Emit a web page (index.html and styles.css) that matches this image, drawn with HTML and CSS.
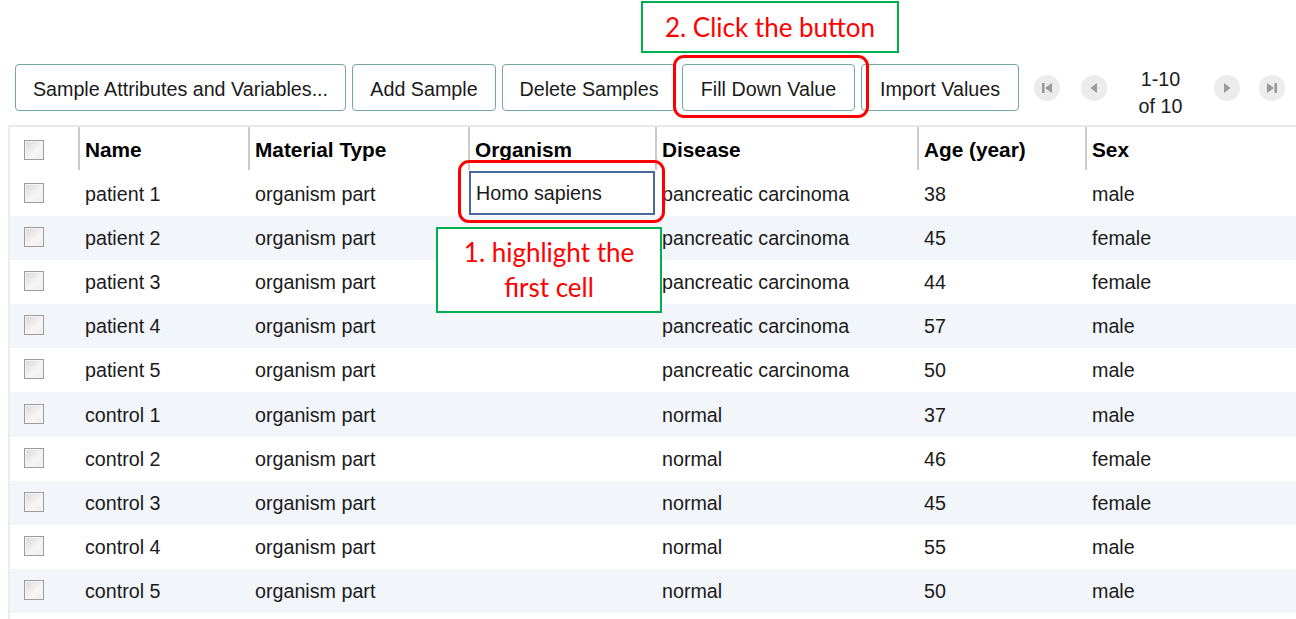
FILE: index.html
```html
<!DOCTYPE html>
<html>
<head>
<meta charset="utf-8">
<link rel="stylesheet" href="styles.css">
</head>
<body>
<div class="page">
  <div class="toolbar">
    <button class="btn btn-attr">Sample Attributes and Variables...</button>
    <button class="btn btn-add">Add Sample</button>
    <button class="btn btn-del">Delete Samples</button>
    <button class="btn btn-fill">Fill Down Value</button>
    <button class="btn btn-imp">Import Values</button>
    <div class="pager">
      <span class="pg"><svg width="26" height="26" viewBox="0 0 26 26"><circle cx="13" cy="13" r="13" fill="#ececec"/><rect x="8" y="8" width="2.5" height="10" fill="#9a9a9a"/><path d="M18 8 L11 13 L18 18 Z" fill="#9a9a9a"/></svg></span>
      <span class="pg"><svg width="26" height="26" viewBox="0 0 26 26"><circle cx="13" cy="13" r="13" fill="#ececec"/><path d="M16 8 L9.5 13 L16 18 Z" fill="#9a9a9a"/></svg></span>
      <span class="pg-text">1-10<br>of 10</span>
      <span class="pg"><svg width="26" height="26" viewBox="0 0 26 26"><circle cx="13" cy="13" r="13" fill="#ececec"/><path d="M10 8 L16.5 13 L10 18 Z" fill="#9a9a9a"/></svg></span>
      <span class="pg"><svg width="26" height="26" viewBox="0 0 26 26"><circle cx="13" cy="13" r="13" fill="#ececec"/><path d="M8 8 L15 13 L8 18 Z" fill="#9a9a9a"/><rect x="15.5" y="8" width="2.5" height="10" fill="#9a9a9a"/></svg></span>
    </div>
  </div>

  <div class="grid">
    <div class="row head">
      <div class="cell ck"><span class="box"></span></div>
      <div class="cell hc">Name</div>
      <div class="cell hc">Material Type</div>
      <div class="cell hc">Organism</div>
      <div class="cell hc">Disease</div>
      <div class="cell hc">Age (year)</div>
      <div class="cell hc">Sex</div>
    </div>
    <div class="row"><div class="cell ck"><span class="box"></span></div><div class="cell">patient 1</div><div class="cell">organism part</div><div class="cell sel">Homo sapiens</div><div class="cell">pancreatic carcinoma</div><div class="cell">38</div><div class="cell">male</div></div>
    <div class="row alt"><div class="cell ck"><span class="box"></span></div><div class="cell">patient 2</div><div class="cell">organism part</div><div class="cell"></div><div class="cell">pancreatic carcinoma</div><div class="cell">45</div><div class="cell">female</div></div>
    <div class="row"><div class="cell ck"><span class="box"></span></div><div class="cell">patient 3</div><div class="cell">organism part</div><div class="cell"></div><div class="cell">pancreatic carcinoma</div><div class="cell">44</div><div class="cell">female</div></div>
    <div class="row alt"><div class="cell ck"><span class="box"></span></div><div class="cell">patient 4</div><div class="cell">organism part</div><div class="cell"></div><div class="cell">pancreatic carcinoma</div><div class="cell">57</div><div class="cell">male</div></div>
    <div class="row"><div class="cell ck"><span class="box"></span></div><div class="cell">patient 5</div><div class="cell">organism part</div><div class="cell"></div><div class="cell">pancreatic carcinoma</div><div class="cell">50</div><div class="cell">male</div></div>
    <div class="row alt"><div class="cell ck"><span class="box"></span></div><div class="cell">control 1</div><div class="cell">organism part</div><div class="cell"></div><div class="cell">normal</div><div class="cell">37</div><div class="cell">male</div></div>
    <div class="row"><div class="cell ck"><span class="box"></span></div><div class="cell">control 2</div><div class="cell">organism part</div><div class="cell"></div><div class="cell">normal</div><div class="cell">46</div><div class="cell">female</div></div>
    <div class="row alt"><div class="cell ck"><span class="box"></span></div><div class="cell">control 3</div><div class="cell">organism part</div><div class="cell"></div><div class="cell">normal</div><div class="cell">45</div><div class="cell">female</div></div>
    <div class="row"><div class="cell ck"><span class="box"></span></div><div class="cell">control 4</div><div class="cell">organism part</div><div class="cell"></div><div class="cell">normal</div><div class="cell">55</div><div class="cell">male</div></div>
    <div class="row alt"><div class="cell ck"><span class="box"></span></div><div class="cell">control 5</div><div class="cell">organism part</div><div class="cell"></div><div class="cell">normal</div><div class="cell">50</div><div class="cell">male</div></div>
  </div>

  <div class="note note-top">2. Click the button</div>
  <div class="note note-cell">1. highlight the<br>first cell</div>
  <div class="ring ring-btn"></div>
  <div class="ring ring-cell"></div>
</div>
</body>
</html>
```

FILE: styles.css
```css
* { box-sizing: border-box; }
html, body { margin: 0; padding: 0; background: #fff; }
body {
  font-family: "Liberation Sans", Arial, sans-serif;
  font-size: 19.7px;
  color: #1a1a1a;
  width: 1296px;
  height: 619px;
  overflow: hidden;
}
.page { position: relative; width: 1296px; height: 619px; }

.toolbar {
  display: flex;
  align-items: center;
  gap: 6px;
  padding: 64px 0 0 15px;
  height: 111px;
}
.btn {
  height: 47px;
  background: #fff;
  border: 1.5px solid #74a89f;
  border-radius: 4px;
  font-family: inherit;
  font-size: 19.7px;
  color: #1a1a1a;
  padding: 3px 0 0;
  flex: none;
}
.btn-attr { width: 331px; }
.btn-add { width: 144px; }
.btn-del { width: 174px; }
.btn-fill { width: 173px; }
.btn-imp { width: 158px; }

.pager {
  display: flex;
  align-items: center;
  margin-left: 9px;
  height: 47px;
}
.pg { width: 26px; height: 26px; display: block; flex: none; }
.pg svg { display: block; }
.pager .pg:nth-child(2) { margin-left: 21px; }
.pg-text {
  width: 107px;
  text-align: center;
  line-height: 27px;
  margin-top: 11px;
}
.pager .pg:nth-child(5) { margin-left: 19px; }

.grid {
  margin: 14px 0 0 8px;
  border-top: 2px solid #e9e9e9;
  border-left: 2px solid #ececec;
  height: 500px;
}
.row {
  display: grid;
  grid-template-columns: 68px 170px 220px 187px 262px 168px 1fr;
  height: 44.1px;
}
.row.head { height: 45px; align-items: start; }
.row.alt { background: #f2f5fa; }
.cell {
  display: flex;
  align-items: center;
  padding-left: 7px;
  height: 100%;
  white-space: nowrap;
  padding-top: 1px;
}
.cell.ck { padding-left: 14px; padding-top: 0; }
.hc {
  font-weight: bold;
  font-size: 20.8px;
  color: #000;
  height: 43px;
  border-left: 2px solid #cbcbcb;
  padding-left: 5px;
  padding-top: 3px;
}
.box {
  width: 20px;
  height: 20px;
  border: 1px solid #9c9c9c;
  box-shadow: inset 0 0 0 1px #f4f4f4;
  background: linear-gradient(135deg, #d8d8d8, #f6f6f6 60%, #ececec);
  display: block;
  margin-top: -2px;
}
.head .box { margin-top: 0; }
.cell.sel {
  border: 2px solid #4a6a9e;
  margin: -1px 0 1px 1px;
  padding-left: 5px;
  background: #fff;
}

.note {
  position: absolute;
  border: 2px solid #00b050;
  background: #fff;
  color: #ff0000;
  font-family: Lato, "Open Sans", sans-serif;
  font-size: 26px;
  text-align: center;
  display: flex;
  align-items: center;
  justify-content: center;
}
.note-top { left: 641px; top: 1px; width: 258px; height: 52px; }
.note-cell { left: 436px; top: 227px; width: 226px; height: 86px; line-height: 35px; }

.ring {
  position: absolute;
  border: 3px solid #ff0000;
  border-radius: 11px;
}
.ring-btn { left: 673px; top: 55px; width: 196px; height: 63px; }
.ring-cell { left: 458px; top: 160px; width: 207px; height: 63px; }
```
